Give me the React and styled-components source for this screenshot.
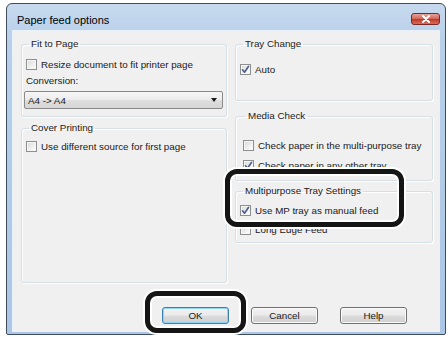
import React from "react";
import styled, { createGlobalStyle } from "styled-components";

const Global = createGlobalStyle`
  html, body { margin: 0; padding: 0; background: #ffffff; }
  body { font-family: "Liberation Sans", Arial, sans-serif; }
  * { box-sizing: border-box; }
`;

const Page = styled.div`
  position: relative;
  width: 448px;
  height: 337px;
  padding: 3px 2px 0 6px;
  overflow: hidden;
  background: #fff;
`;

const Window = styled.div`
  width: 440px;
  height: 332px;
  border: 1px solid #3f4d5c;
  border-radius: 6px 6px 2px 2px;
  background: linear-gradient(180deg, #c6d9ee 0%, #b7cfe9 12%, #abc7e5 100%);
  display: flex;
  flex-direction: column;
  padding: 0 6px 3px 6px;
`;

const TitleBar = styled.div`
  height: 27px;
  flex: none;
  display: flex;
  align-items: flex-start;
  justify-content: space-between;
  padding: 0 0 0 4px;
`;

const Title = styled.div`
  font-size: 11px;
  line-height: 13px;
  margin-top: 10px;
  color: #000;
`;

const CloseButton = styled.div`
  width: 29px;
  height: 12px;
  margin-top: 9px;
  margin-right: -1px;
  border: 1px solid #7a2b25;
  border-radius: 3px;
  background: linear-gradient(180deg, #e6a59a 0%, #d46a5c 45%, #c23b2a 55%, #d96c5c 100%);
  display: flex;
  align-items: center;
  justify-content: center;
`;

const Client = styled.div`
  flex: 1;
  background: #f0f0f0;
  box-shadow: 0 0 0 1px #e8f0f8;
  display: flex;
  flex-direction: column;
  padding: 7px 4px 0 8px;
`;

const Columns = styled.div`
  display: grid;
  grid-template-columns: 206px 198px;
  column-gap: 8px;
  align-items: start;
`;

const Column = styled.div`
  display: flex;
  flex-direction: column;
`;

const Group = styled.fieldset`
  margin: ${(p) => p.$mt || 0}px 0 0 0;
  padding: 0 3px 0 ${(p) => p.$pl ?? 2}px;
  border: 1px solid #d5dfe5;
  border-radius: 3px;
  box-shadow: inset 1px 1px 0 #ffffff, 1px 1px 0 #ffffff;
  height: ${(p) => p.$h}px;
  min-width: 0;
  display: flex;
  flex-direction: column;
`;

const Legend = styled.legend`
  font-size: 9.8px;
  line-height: 12px;
  padding: 0 2px;
  margin-left: 5px;
  color: #1a1a1a;
`;

const Row = styled.label`
  display: flex;
  align-items: center;
  height: 14px;
  margin-top: ${(p) => p.$mt || 0}px;
  padding-left: 2px;
  font-size: 9.8px;
  color: #1a1a1a;
  gap: 4px;
  white-space: nowrap;
`;

const Box = styled.span`
  width: 11px;
  height: 11px;
  flex: none;
  border: 1px solid #8e8f8f;
  background: linear-gradient(135deg, #d8d8d8 0%, #f4f4f4 70%, #ffffff 100%);
  box-shadow: inset 0 0 0 1px #f6f6f6;
  display: flex;
  align-items: center;
  justify-content: center;
`;

const Caption = styled.div`
  font-size: 9.8px;
  line-height: 12px;
  height: 12px;
  margin-top: 4px;
  padding-left: 2px;
  color: #1a1a1a;
`;

const Select = styled.div`
  margin-top: 4px;
  height: 18px;
  border: 1px solid #8a8a8a;
  border-radius: 2px;
  background: linear-gradient(180deg, #f6f6f6 0%, #ececec 48%, #dedede 52%, #d6d6d6 100%);
  display: flex;
  align-items: center;
  justify-content: space-between;
  padding: 0 5px 0 3px;
  font-size: 9.8px;
  color: #1a1a1a;
`;

const Arrow = styled.span`
  width: 0;
  height: 0;
  border-left: 3.5px solid transparent;
  border-right: 3.5px solid transparent;
  border-top: 4px solid #1a1a1a;
`;

const Footer = styled.div`
  display: flex;
  justify-content: flex-end;
  gap: 22px;
  padding-right: 28px;
  margin-top: 24px;
`;

const Button = styled.div`
  width: 67px;
  height: 17px;
  border: 1px solid ${(p) => (p.$default ? "#3c7fb1" : "#707070")};
  border-radius: 3px;
  background: linear-gradient(180deg, #f2f2f2 0%, #ebebeb 48%, #dddddd 52%, #cfcfcf 100%);
  box-shadow: inset 0 0 0 1px ${(p) => (p.$default ? "#8fd3f5" : "#fbfbfb")};
  display: flex;
  align-items: center;
  justify-content: center;
  font-size: 9.8px;
  color: #1a1a1a;
`;

const Ring = styled.div`
  position: absolute;
  left: ${(p) => p.$x}px;
  top: ${(p) => p.$y}px;
  width: ${(p) => p.$w}px;
  height: ${(p) => p.$h}px;
  border: 5px solid #151515;
  border-radius: 12px;
  box-shadow: 0 0 0 2px #ffffff, inset 0 0 0 2px #ffffff;
  pointer-events: none;
`;

const Check = ({ on }) => (
  <Box>
    {on && (
      <svg width="9" height="9" viewBox="0 0 9 9">
        <path d="M1.5 4.8 L3.5 7.2 L7.6 1.3" fill="none" stroke="#4a5d8f" strokeWidth="1.6" strokeLinecap="round" strokeLinejoin="round" />
      </svg>
    )}
  </Box>
);

const CheckItem = ({ on, children, mt }) => (
  <Row $mt={mt}>
    <Check on={on} />
    <span>{children}</span>
  </Row>
);

export default function App() {
  return (
    <>
      <Global />
      <Page>
        <Window>
          <TitleBar>
            <Title>Paper feed options</Title>
            <CloseButton>
              <svg width="10" height="8" viewBox="0 0 10 8">
                <path d="M2 1 L8 7 M8 1 L2 7" stroke="#fff" strokeWidth="2" strokeLinecap="round" />
              </svg>
            </CloseButton>
          </TitleBar>
          <Client>
            <Columns>
              <Column>
                <Group $h={79}>
                  <Legend>Fit to Page</Legend>
                  <CheckItem mt={7}>Resize document to fit printer page</CheckItem>
                  <Caption>Conversion:</Caption>
                  <Select>
                    <span>A4 -&gt; A4</span>
                    <Arrow />
                  </Select>
                </Group>
                <Group $h={161} $mt={5}>
                  <Legend>Cover Printing</Legend>
                  <CheckItem mt={5}>Use different source for first page</CheckItem>
                </Group>
              </Column>
              <Column>
                <Group $h={63}>
                  <Legend>Tray Change</Legend>
                  <CheckItem on mt={12}>Auto</CheckItem>
                </Group>
                <Group $h={71} $mt={9} $pl={5}>
                  <Legend>Media Check</Legend>
                  <CheckItem mt={16}>Check paper in the multi-purpose tray</CheckItem>
                  <CheckItem on mt={6}>Check paper in any other tray</CheckItem>
                </Group>
                <Group $h={58} $mt={4}>
                  <Legend>Multipurpose Tray Settings</Legend>
                  <CheckItem on mt={6}>Use MP tray as manual feed</CheckItem>
                  <CheckItem mt={5}>Long Edge Feed</CheckItem>
                </Group>
              </Column>
            </Columns>
            <Footer>
              <Button $default>OK</Button>
              <Button>Cancel</Button>
              <Button>Help</Button>
            </Footer>
          </Client>
        </Window>
        <Ring $x={225} $y={169} $w={179} $h={58} />
        <Ring $x={145} $y={291} $w={101} $h={42} />
      </Page>
    </>
  );
}
